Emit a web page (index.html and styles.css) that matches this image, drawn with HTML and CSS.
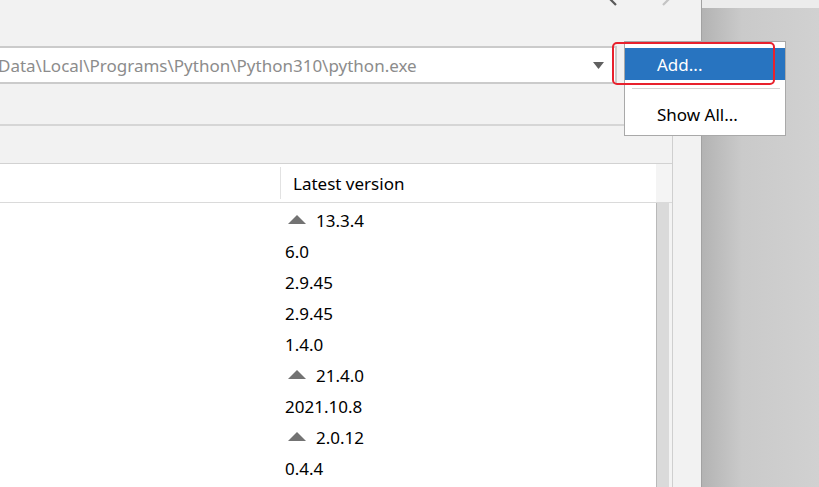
FILE: index.html
```html
<!DOCTYPE html>
<html lang="en">
<head>
<meta charset="UTF-8">
<meta name="viewport" content="width=device-width, initial-scale=1.0">
<title>Python Interpreter</title>
<link rel="stylesheet" href="styles.css">
</head>
<body>

<div class="window">
  <div class="topbar">
    <svg class="nav" width="70" height="10" viewBox="0 0 70 10">
      <line x1="4" y1="-4" x2="13" y2="5" stroke="#5a5a5a" stroke-width="2.2"/>
      <line x1="69" y1="-4" x2="60" y2="5" stroke="#c4c4c4" stroke-width="2.2"/>
    </svg>
  </div>

  <div class="combo-row">
    <div class="combo">
      <span class="combo-text">Data\Local\Programs\Python\Python310\python.exe</span>
      <svg class="combo-arrow" width="11" height="7" viewBox="0 0 11 7">
        <polygon points="0,0 11,0 5.5,7" fill="#606060"/>
      </svg>
    </div>
  </div>

  <div class="panel">
    <div class="toolbar"></div>
    <div class="table">
      <div class="thead">
        <div class="th th-name"></div>
        <div class="th">Latest version</div>
        <div class="th-corner"></div>
      </div>
      <div class="tbody">
        <div class="rows">
          <div class="row"><svg class="up" width="18" height="9" viewBox="0 0 18 9"><polygon points="0,9 18,9 9,0" fill="#737373"/></svg>13.3.4</div>
          <div class="row">6.0</div>
          <div class="row">2.9.45</div>
          <div class="row">2.9.45</div>
          <div class="row">1.4.0</div>
          <div class="row"><svg class="up" width="18" height="9" viewBox="0 0 18 9"><polygon points="0,9 18,9 9,0" fill="#737373"/></svg>21.4.0</div>
          <div class="row">2021.10.8</div>
          <div class="row"><svg class="up" width="18" height="9" viewBox="0 0 18 9"><polygon points="0,9 18,9 9,0" fill="#737373"/></svg>2.0.12</div>
          <div class="row">0.4.4</div>
        </div>
        <div class="scrollbar"></div>
      </div>
    </div>
  </div>
</div>

<div class="backdrop">
  <div class="backdrop-top"></div>
</div>

<div class="menu">
  <div class="menu-item active">Add...</div>
  <div class="menu-sep"></div>
  <div class="menu-item">Show All...</div>
</div>
<div class="mark"></div>

</body>
</html>
```

FILE: styles.css
```css
body {
  margin: 0;
  width: 819px;
  height: 487px;
  overflow: hidden;
  display: flex;
  position: relative;
  font-family: "Noto Sans", "Open Sans", sans-serif;
  font-size: 17px;
  color: #000;
}
.window {
  width: 701px;
  flex-shrink: 0;
  background-color: #f2f2f2;
  border-right: 1px solid #a2a2a2;
  overflow: hidden;
}
.topbar {
  height: 46px;
  display: flex;
  align-items: flex-start;
}
.nav {
  margin-left: 603px;
}
.combo-row {
  height: 38px;
}
.combo {
  box-sizing: border-box;
  width: 629px;
  height: 38px;
  margin-left: -12px;
  background-color: #fff;
  border: 2px solid #cbcbcb;
  border-left: none;
  display: flex;
  align-items: center;
}
.combo-text {
  flex: 1;
  padding-left: 10px;
  color: #8c8c8c;
  white-space: nowrap;
  overflow: hidden;
}
.combo-arrow {
  margin-right: 11px;
}
.panel {
  width: 672px;
  margin-top: 40px;
  border-top: 2px solid #d6d6d6;
  border-right: 1px solid #cfcfcf;
}
.toolbar {
  height: 37px;
}
.table {
  border-top: 1px solid #d2d2d2;
}
.thead {
  display: grid;
  grid-template-columns: 281px 1fr 16px;
  height: 38px;
  background-color: #fff;
  border-bottom: 1px solid #dadada;
}
.th {
  display: flex;
  align-items: center;
  padding-left: 12px;
  padding-top: 1px;
}
.th-name {
  margin: 3px 0;
  padding: 0;
  border-right: 1px solid #e2e2e2;
}
.th-corner {
  background-color: #f4f4f4;
}
.tbody {
  display: flex;
  height: 300px;
}
.rows {
  flex: 1;
  background-color: #fff;
  padding-left: 285px;
  padding-top: 2px;
}
.row {
  height: 31px;
  display: flex;
  align-items: center;
}
.up {
  margin-left: 3px;
  margin-right: 10px;
  margin-top: -2px;
}
.scrollbar {
  width: 12px;
  background-color: #dadada;
  border-left: 1px solid #b9b9b9;
  border-right: 3px solid #f3f3f3;
}
.backdrop {
  flex: 1;
  background: linear-gradient(to right, #b3b3b3, #cacaca 40px, #d1d1d1);
}
.backdrop-top {
  height: 8px;
  background-color: #ececec;
}
.menu {
  position: absolute;
  left: 624px;
  top: 41px;
  width: 160px;
  padding: 6px 0 5px;
  background-color: #fff;
  border: 1px solid #a9a9a9;
}
.menu-item {
  height: 32px;
  display: flex;
  align-items: center;
  padding-left: 32px;
}
.menu-item.active {
  background-color: #2874c0;
  color: #fff;
}
.menu-sep {
  height: 1px;
  margin: 8px 5px 9px 7px;
  background-color: #d4d4d4;
}
.mark {
  position: absolute;
  left: 612px;
  top: 42px;
  width: 159px;
  height: 39px;
  border: 2px solid #e8212d;
  border-radius: 5px;
}
```
